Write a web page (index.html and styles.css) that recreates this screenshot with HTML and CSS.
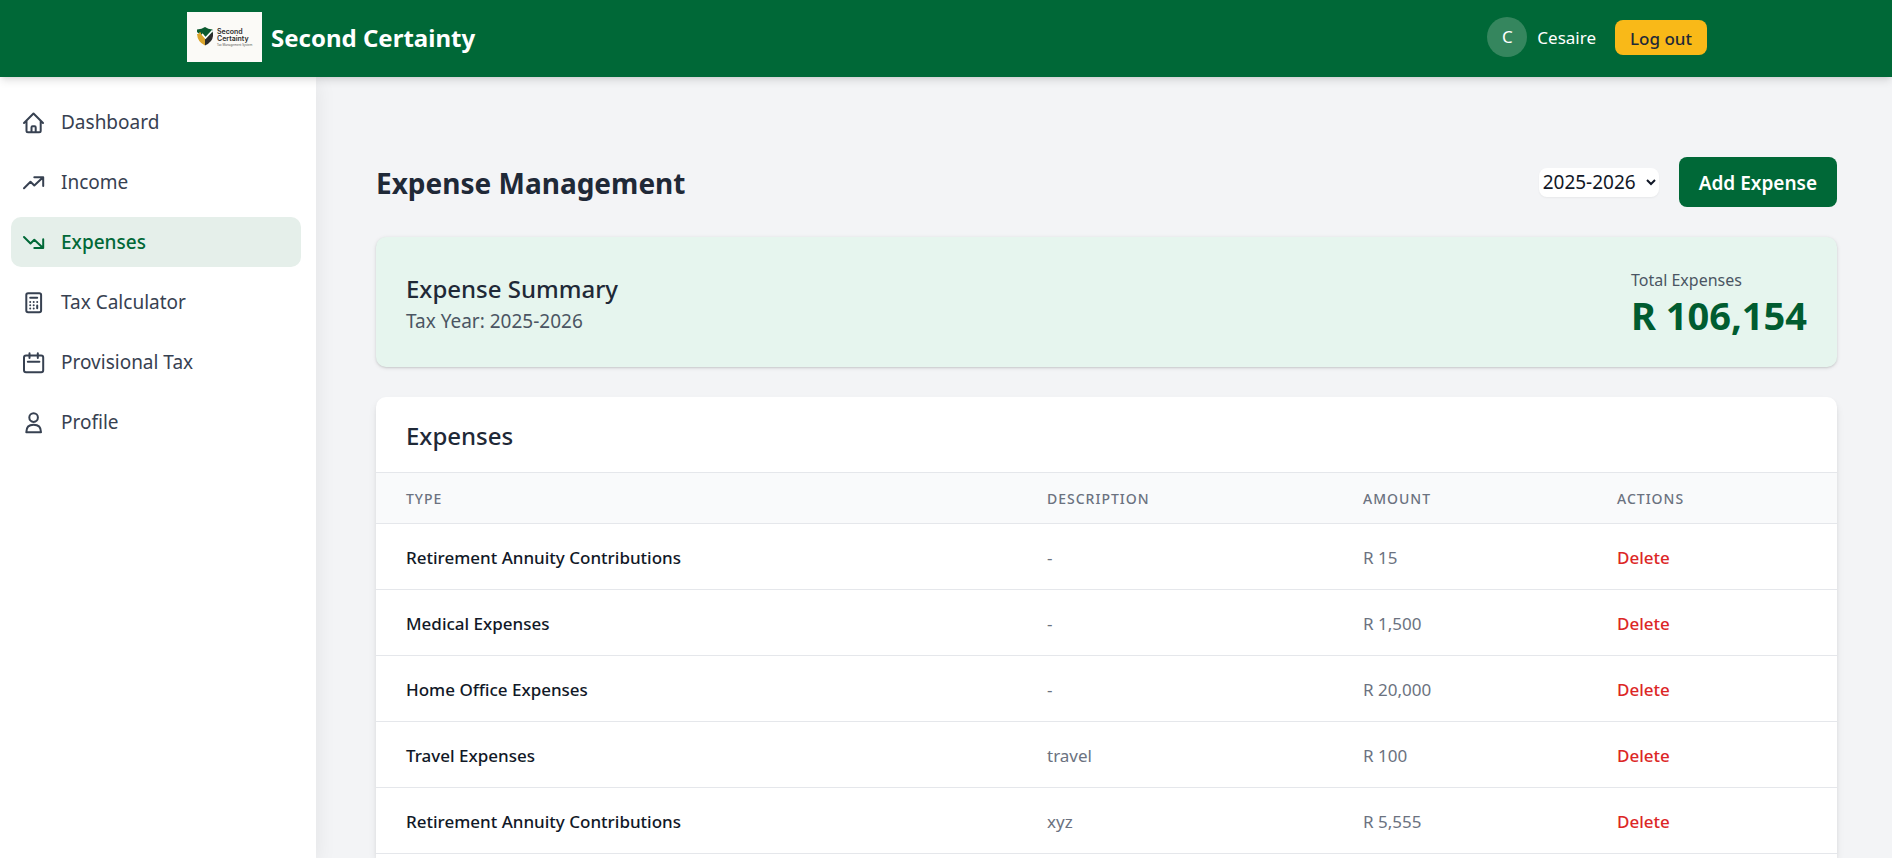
FILE: index.html
```html
<!DOCTYPE html>
<html lang="en">
<head>
<meta charset="utf-8">
<meta name="viewport" content="width=device-width, initial-scale=1">
<title>Second Certainty - Expense Management</title>
<link rel="stylesheet" href="styles.css">
</head>
<body>
<header class="topbar">
  <div class="topbar-inner">
    <a class="brand" href="#">
      <svg class="brand-logo" viewBox="0 0 75 50" role="img" aria-label="Second Certainty logo">
        <rect width="75" height="50" fill="#fbfaf7"/>
        <path d="M10 17.500 Q15 17 18 15 Q21 17 25.500 17.500 V22 L18 27 L10 20Z" fill="#0b5a30"/>
        <path d="M10 22 H12 V20.500 H14 V22.500 H15.500 V21 L18 25 V33.500 Q10.500 30 10 22Z" fill="#dba52c"/>
        <path d="M18 27 L26 20 V24 Q25.500 30 18 33.500Z" fill="#2c2c2b"/>
        <path d="M15 22 L18.500 26 L25.500 18.500" fill="none" stroke="#fff" stroke-width="1.600"/>
        <text class="logo-name" x="30" y="22">Second</text>
        <text class="logo-name" x="30" y="29">Certainty</text>
        <text class="logo-tag" x="30" y="34">Tax Management System</text>
      </svg>
      <span class="brand-name">Second Certainty</span>
    </a>
    <div class="account">
      <span class="avatar">C</span>
      <span class="user-name">Cesaire</span>
      <button class="logout" type="button">Log out</button>
    </div>
  </div>
</header>
<div class="shell">
  <nav class="sidebar" aria-label="Main">
    <a class="nav-item" href="#">
      <svg class="icon" viewBox="0 0 25 25"><path d="M3 13 L12.500 3.500 L22 13 M5.500 11 V20.700 Q5.500 22.200 7 22.200 H18.200 Q19.700 22.200 19.700 20.700 V11 M10.500 22 V17.500 Q10.500 16.200 11.500 16.200 H13.700 Q14.700 16.200 14.700 17.500 V22"/></svg>
      Dashboard</a>
    <a class="nav-item" href="#">
      <svg class="icon" viewBox="0 0 25 25"><path d="M3 18.300 L9.500 11.800 L13.300 15.500 L21.800 7.500 M13.300 7.200 H22.200 V16"/></svg>
      Income</a>
    <a class="nav-item active" href="#" aria-current="page">
      <svg class="icon" viewBox="0 0 25 25"><path d="M3 7 L9.500 13.500 L13.300 9.800 L21.800 17.800 M13.300 18.100 H22.200 V9.300"/></svg>
      Expenses</a>
    <a class="nav-item" href="#">
      <svg class="icon" viewBox="0 0 25 25"><rect x="5.300" y="3.300" width="14.800" height="19" rx="1.800"/><path d="M9.200 7.700 H16.200 M16.200 15.500 V18.300"/><path d="M9.200 12 h0 M12.700 12 h0 M16.200 12 h0 M9.200 15.200 h0 M12.700 15.200 h0 M9.200 18.400 h0 M12.700 18.400 h0"/></svg>
      Tax Calculator</a>
    <a class="nav-item" href="#">
      <svg class="icon" viewBox="0 0 25 25"><rect x="3" y="5.500" width="19.200" height="16.800" rx="2"/><path d="M8.500 3.200 V8 M16.800 3.200 V8 M6.800 11.800 H18.400"/></svg>
      Provisional Tax</a>
    <a class="nav-item" href="#">
      <svg class="icon" viewBox="0 0 25 25"><circle cx="12.600" cy="7.600" r="4.300"/><path d="M5.300 22.200 Q5.300 14.800 12.600 14.800 Q20 14.800 20 22.200Z"/></svg>
      Profile</a>
  </nav>
  <main class="content">
    <div class="page-head">
      <h1>Expense Management</h1>
      <div class="page-actions">
        <select class="year" aria-label="Tax year"><option>2025-2026</option><option>2024-2025</option></select>
        <button class="add" type="button">Add Expense</button>
      </div>
    </div>
    <section class="summary">
      <div>
        <h2>Expense Summary</h2>
        <p class="tax-year">Tax Year: 2025-2026</p>
      </div>
      <div>
        <p class="total-label">Total Expenses</p>
        <p class="total">R 106,154</p>
      </div>
    </section>
    <section class="card">
      <h2 class="card-title">Expenses</h2>
      <table class="expenses">
        <colgroup><col><col class="col-desc"><col class="col-amount"><col class="col-actions"></colgroup>
        <thead><tr><th scope="col">Type</th><th scope="col">Description</th><th scope="col">Amount</th><th scope="col">Actions</th></tr></thead>
        <tbody>
          <tr><td class="type">Retirement Annuity Contributions</td><td>-</td><td>R 15</td><td><button class="delete" type="button">Delete</button></td></tr>
          <tr><td class="type">Medical Expenses</td><td>-</td><td>R 1,500</td><td><button class="delete" type="button">Delete</button></td></tr>
          <tr><td class="type">Home Office Expenses</td><td>-</td><td>R 20,000</td><td><button class="delete" type="button">Delete</button></td></tr>
          <tr><td class="type">Travel Expenses</td><td>travel</td><td>R 100</td><td><button class="delete" type="button">Delete</button></td></tr>
          <tr><td class="type">Retirement Annuity Contributions</td><td>xyz</td><td>R 5,555</td><td><button class="delete" type="button">Delete</button></td></tr>
        </tbody>
      </table>
    </section>
  </main>
</div>
</body>
</html>
```
FILE: styles.css
```css
* { box-sizing: border-box; }

body {
  margin: 0;
  min-height: 100vh;
  display: flex;
  flex-direction: column;
  background: #f3f4f6;
  color: #1f2937;
  font-family: "Segoe UI", "Noto Sans", "Open Sans", sans-serif;
  font-size: 19px;
  line-height: 30px;
}

h1, h2, p { margin: 0; }
button, select { font: inherit; border: 0; cursor: pointer; }
a { color: inherit; text-decoration: none; }

.topbar {
  position: relative;
  z-index: 2;
  background: #006837;
  color: #fff;
  box-shadow: 0 5px 8px -1px rgba(0, 0, 0, .1), 0 2px 5px -2px rgba(0, 0, 0, .1);
}
.topbar-inner {
  max-width: 1600px;
  margin: 0 auto;
  padding: 12px 39px 15px 41px;
  display: flex;
  justify-content: space-between;
  align-items: center;
}
.brand { display: flex; align-items: center; gap: 9px; }
.brand-logo { width: 75px; height: 50px; }
.brand-name { font-size: 24px; font-weight: 700; padding-top: 2px; }
.logo-name { font-family: Inter, sans-serif; font-size: 7px; font-weight: 600; fill: #2c2c2b; }
.logo-tag { font-size: 3px; fill: #555; }
.account { display: flex; align-items: center; gap: 10px; font-size: 17px; }
.avatar {
  width: 40px;
  height: 40px;
  border-radius: 50%;
  background: #35865e;
  display: grid;
  place-items: center;
}
.user-name { margin-right: 9px; padding-top: 2px; }
.logout {
  padding: 6px 15px 4px;
  border-radius: 8px;
  background: #f9b918;
  color: #1f2937;
  font-weight: 500;
  line-height: 25px;
}

.shell { flex: 1; display: flex; }
.sidebar {
  flex: 0 0 316px;
  padding: 20px 15px 20px 11px;
  background: #fff;
  box-shadow: 0 5px 20px rgba(0, 0, 0, .08);
  display: flex;
  flex-direction: column;
  gap: 10px;
}
.nav-item {
  display: flex;
  align-items: center;
  gap: 15px;
  padding: 10px;
  border-radius: 10px;
  color: #374151;
}
.nav-item.active { background: #e5efea; color: #006837; font-weight: 500; }
.icon {
  width: 25px;
  height: 25px;
  fill: none;
  stroke: currentColor;
  stroke-width: 2;
  stroke-linecap: round;
  stroke-linejoin: round;
}

.content {
  flex: 1;
  min-width: 0;
  padding: 80px 55px 0 60px;
  display: flex;
  flex-direction: column;
}
.page-head {
  display: flex;
  justify-content: space-between;
  align-items: center;
  margin-bottom: 30px;
}
h1 { font-size: 28px; line-height: 40px; font-weight: 700; padding-top: 2px; }
h2 { font-size: 24px; line-height: 35px; font-weight: 500; }
.page-actions { display: flex; align-items: center; gap: 20px; }
.year {
  width: 120px;
  height: 29px;
  border-radius: 8px;
  background: #fff;
  color: #111827;
  box-shadow: 0 1px 2px rgba(0, 0, 0, .05);
}
.add {
  padding: 11px 20px 9px;
  border-radius: 8px;
  background: #006837;
  color: #fff;
  font-weight: 600;
}
.summary {
  display: flex;
  justify-content: space-between;
  align-items: center;
  padding: 31px 30px 29px;
  margin-bottom: 30px;
  border-radius: 10px;
  background: #e6f5ee;
  box-shadow: 0 1px 4px rgba(0, 0, 0, .1), 0 1px 2px rgba(0, 0, 0, .1);
}
.tax-year { color: #4b5563; }
.total-label { font-size: 16px; line-height: 25px; color: #4b5563; }
.total { font-size: 38px; line-height: 45px; font-weight: 700; color: #005c30; }

.card {
  flex: 1;
  border-radius: 10px 10px 0 0;
  overflow: hidden;
  background: #fff;
  box-shadow: 0 5px 8px -1px rgba(0, 0, 0, .1), 0 2px 5px -2px rgba(0, 0, 0, .1);
}
.card-title { padding: 21px 30px 19px; border-bottom: 1px solid #e5e7eb; }
.expenses { width: 100%; table-layout: fixed; border-collapse: collapse; text-align: left; }
.col-desc { width: 316px; }
.col-amount { width: 254px; }
.col-actions { width: 250px; }
.expenses th {
  padding: 16px 30px 14px;
  background: #f9fafb;
  border-bottom: 1px solid #e5e7eb;
  color: #6b7280;
  font-size: 14px;
  line-height: 20px;
  font-weight: 500;
  letter-spacing: 1px;
  text-transform: uppercase;
}
.expenses td {
  padding: 21px 30px 19px;
  border-bottom: 1px solid #e5e7eb;
  color: #6b7280;
  font-size: 17px;
  line-height: 25px;
}
.expenses .type { color: #111827; font-weight: 500; }
.delete { display: block; padding: 0; background: none; color: #dc2626; font-weight: 500; }
```
